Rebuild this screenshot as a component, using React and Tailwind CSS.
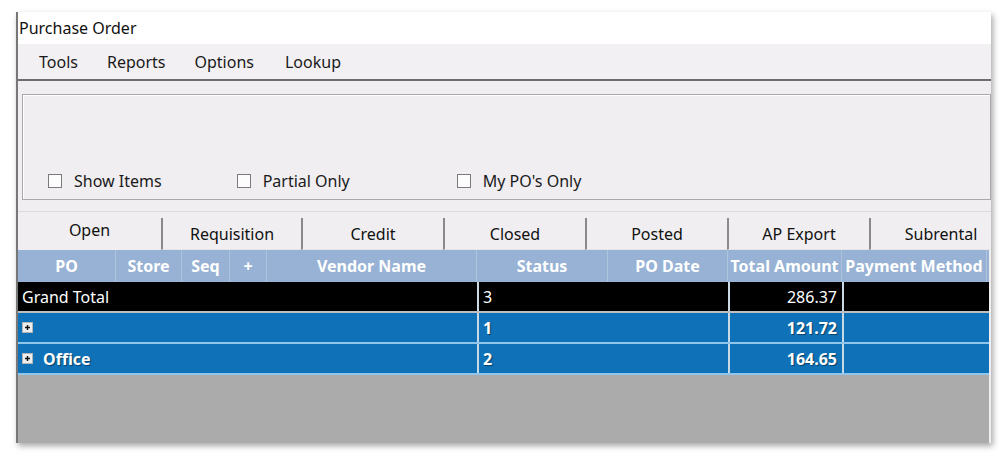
const menus = ['Tools', 'Reports', 'Options', 'Lookup']

const tabs = [
  { label: 'Open', w: 'w-[143px]' },
  { label: 'Requisition', w: 'w-[140px]' },
  { label: 'Credit', w: 'w-[142px]' },
  { label: 'Closed', w: 'w-[142px]' },
  { label: 'Posted', w: 'w-[142px]' },
  { label: 'AP Export', w: 'w-[142px]' },
  { label: 'Subrental', w: 'w-[142px]' },
]

const cols = [
  { label: 'PO', w: 'w-[98px]' },
  { label: 'Store', w: 'w-[66px]' },
  { label: 'Seq', w: 'w-[48px]' },
  { label: '+', w: 'w-[37px]' },
  { label: 'Vendor Name', w: 'w-[210px]' },
  { label: 'Status', w: 'w-[131px]' },
  { label: 'PO Date', w: 'w-[120px]' },
  { label: 'Total Amount', w: 'w-[114px]' },
  { label: 'Payment Method', w: 'w-[145px]' },
]

const rows = [
  { name: 'Grand Total', count: '3', total: '286.37', kind: 'total' },
  { name: '', count: '1', total: '121.72', kind: 'group' },
  { name: 'Office', count: '2', total: '164.65', kind: 'group' },
]

function Check({ label, className }) {
  return (
    <div className={`flex items-center gap-[12px] ${className}`}>
      <div className="w-[14px] h-[14px] border border-[#7a7a7a] bg-[#fcfcfc]" />
      <span className="text-[16px] text-[#1a1a1a]">{label}</span>
    </div>
  )
}

function PlusBox() {
  return (
    <svg width="11" height="11" viewBox="0 0 11 11" className="shrink-0">
      <rect x="0.5" y="0.5" width="10" height="10" fill="#eeeeee" stroke="#b5b5b5" />
      <path d="M3 5.5h5M5.5 3v5" stroke="#111" strokeWidth="1.4" />
    </svg>
  )
}

export default function App() {
  return (
    <div className="w-[1007px] h-[456px] bg-white pt-[12px] pl-[16px] font-['Noto_Sans',sans-serif] overflow-hidden">
      <div className="w-[975px] h-[431px] flex flex-col border-l-2 border-[#777] shadow-[2px_3px_6px_rgba(0,0,0,0.35)]">
        <div className="h-[32px] shrink-0 bg-white flex items-center pl-[1px] text-[16px] text-[#111]">Purchase Order</div>

        <div className="h-[37px] shrink-0 bg-[#f2f0f3] flex items-center text-[16px] text-[#1a1a1a] border-b-2 border-[#6d6d6d] pt-[1px]">
          <span className="ml-[21px]">Tools</span>
          <span className="ml-[29px]">Reports</span>
          <span className="ml-[29px]">Options</span>
          <span className="ml-[31px]">Lookup</span>
        </div>

        <div className="flex-1 flex flex-col bg-[#f0eef0]">
          <div className="mt-[13px] ml-[4px] h-[106px] shrink-0 border border-[#a8a8a8] shadow-[inset_1px_1px_0_#fff] flex items-end pb-[6px]">
            <Check label="Show Items" className="ml-[25px]" />
            <Check label="Partial Only" className="ml-[75px]" />
            <Check label="My PO's Only" className="ml-[107px]" />
          </div>

          <div className="mt-[11px] h-[39px] shrink-0 flex items-end border-t border-[#dcdcdc] overflow-hidden">
            {tabs.map((t, i) =>
              i === 0 ? (
                <div key={t.label} className={`${t.w} shrink-0 h-[38px] bg-[#f0eef0] flex items-center justify-center text-[16px] text-[#111] pb-[2px]`}>
                  {t.label}
                </div>
              ) : (
                <div key={t.label} className={`${t.w} shrink-0 h-[32px] border-l-2 border-[#8a8a8a] border-b border-b-[#e4e4e4] flex items-center justify-center text-[16px] text-[#111] bg-[#f0eef0] pt-[1px]`}>
                  {t.label}
                </div>
              )
            )}
          </div>

          <div className="flex-1 flex flex-col bg-[#ababab] mr-[2px]">
            <div className="h-[32px] shrink-0 bg-[#97b2d4] flex">
              {cols.map((c) => (
                <div key={c.label} className={`${c.w} shrink-0 border-r border-[#aec3de] flex items-center justify-center text-[16px] font-bold text-white whitespace-nowrap`}>
                  {c.label}
                </div>
              ))}
            </div>
            {rows.map((r) => {
              const isTotal = r.kind === 'total'
              return (
                <div
                  key={r.name + r.count}
                  className={`h-[31px] shrink-0 flex text-[16px] text-white border-b-2 ${isTotal ? 'bg-black border-[#bfbfbf]' : 'bg-[#0f72b9] border-[#8fc6ea] font-bold [text-shadow:1px_1px_1px_rgba(0,0,0,0.45)]'}`}
                >
                  <div className="w-[461px] shrink-0 flex items-center pl-[4px] gap-[10px] border-r-2 border-[#c9d9e6]">
                    {!isTotal && <PlusBox />}
                    <span>{r.name}</span>
                  </div>
                  <div className="w-[251px] shrink-0 flex items-center pl-[4px] border-r-2 border-[#c9d9e6]">{r.count}</div>
                  <div className="w-[114px] shrink-0 flex items-center justify-end pr-[5px] border-r-2 border-[#c9d9e6]">{r.total}</div>
                  <div className="flex-1" />
                </div>
              )
            })}
          </div>
        </div>
      </div>
    </div>
  )
}
